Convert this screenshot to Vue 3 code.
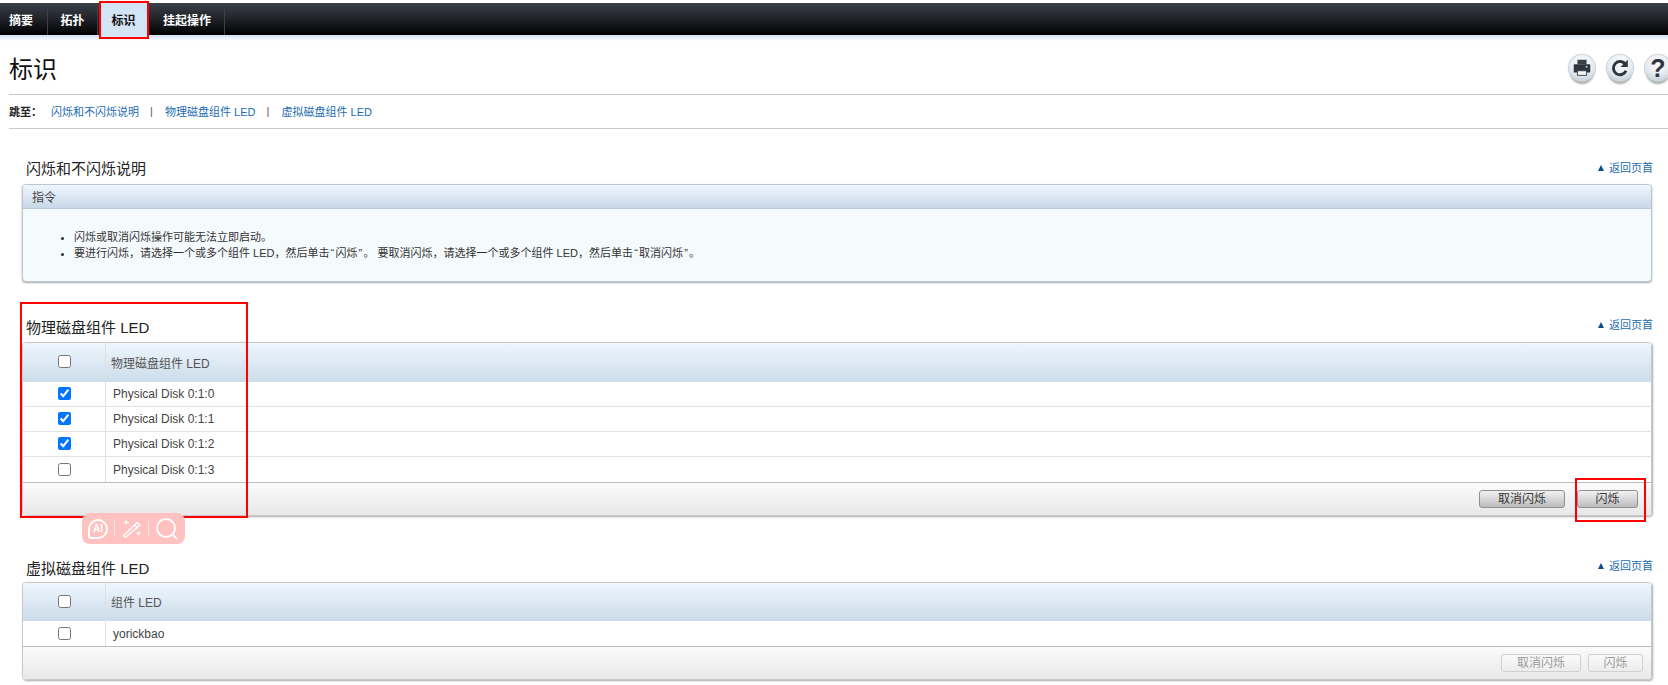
<script setup>
const tabs = [
  { label: '摘要', w: 48 },
  { label: '拓扑', w: 50 },
  { label: '标识', w: 49, active: true },
  { label: '挂起操作', w: 77 },
]
const jumps = ['闪烁和不闪烁说明', '物理磁盘组件 LED', '虚拟磁盘组件 LED']
const disks = [
  { name: 'Physical Disk 0:1:0', on: true },
  { name: 'Physical Disk 0:1:1', on: true },
  { name: 'Physical Disk 0:1:2', on: true },
  { name: 'Physical Disk 0:1:3', on: false },
]
</script>

<template>
  <div class="page">
    <nav class="nav">
      <a
        v-for="t in tabs"
        :key="t.label"
        class="tab"
        :class="{ active: t.active }"
        :style="{ width: t.w + 'px' }"
      >{{ t.label }}</a>
    </nav>
    <div class="strip"></div>

    <header class="head">
      <h1>标识</h1>
      <div class="tools">
        <span class="orb">
          <svg viewBox="0 0 24 24" width="22" height="22">
            <rect x="7" y="3" width="10" height="5" fill="#3a4048" />
            <rect x="3" y="8" width="18" height="9" rx="1" fill="#2f353c" />
            <rect x="7" y="15" width="10" height="5" fill="#f4f6f8" stroke="#3a4048" stroke-width="1" />
            <rect x="16" y="10" width="2" height="1.5" fill="#dfe6ec" />
          </svg>
        </span>
        <span class="orb">
          <svg viewBox="0 0 24 24" width="22" height="22">
            <path d="M18 8.2A7.2 7.2 0 1 0 18.6 15" fill="none" stroke="#2f353c" stroke-width="3.2" />
            <path d="M20.5 3v8h-8z" fill="#2f353c" />
          </svg>
        </span>
        <span class="orb q">?</span>
      </div>
    </header>

    <div class="jump">
      <b>跳至：</b>
      <template v-for="(j, i) in jumps" :key="j">
        <a>{{ j }}</a>
        <i v-if="i < jumps.length - 1">|</i>
      </template>
    </div>

    <section class="sec first">
      <div class="sec-head">
        <h2>闪烁和不闪烁说明</h2>
        <a class="top"><span class="tri"></span>返回页首</a>
      </div>
      <div class="panel">
        <div class="panel-title">指令</div>
        <ul>
          <li>闪烁或取消闪烁操作可能无法立即启动。</li>
          <li>要进行闪烁，请选择一个或多个组件 LED，然后单击<span class="qm">“</span>闪烁<span class="qm">”</span>。 要取消闪烁，请选择一个或多个组件 LED，然后单击<span class="qm">“</span>取消闪烁<span class="qm">”</span>。</li>
        </ul>
      </div>
    </section>

    <section class="sec second">
      <div class="sec-head">
        <h2>物理磁盘组件 LED</h2>
        <a class="top"><span class="tri"></span>返回页首</a>
      </div>
      <div class="table">
        <div class="row thead">
          <div class="chk"><input type="checkbox" /></div>
          <div class="cell hcell">物理磁盘组件 LED</div>
        </div>
        <div v-for="d in disks" :key="d.name" class="row body">
          <div class="chk"><input type="checkbox" :checked="d.on" /></div>
          <div class="cell">{{ d.name }}</div>
        </div>
        <div class="foot">
          <button class="btn wide">取消闪烁</button>
          <button class="btn narrow">闪烁</button>
        </div>
      </div>
    </section>

    <section class="sec third">
      <div class="sec-head">
        <h2>虚拟磁盘组件 LED</h2>
        <a class="top"><span class="tri"></span>返回页首</a>
      </div>
      <div class="table">
        <div class="row thead">
          <div class="chk"><input type="checkbox" /></div>
          <div class="cell hcell">组件 LED</div>
        </div>
        <div class="row body">
          <div class="chk"><input type="checkbox" /></div>
          <div class="cell">yorickbao</div>
        </div>
        <div class="foot">
          <button class="btn wide2" disabled>取消闪烁</button>
          <button class="btn narrow2" disabled>闪烁</button>
        </div>
      </div>
    </section>

    <div class="mark m-tab"></div>
    <div class="mark m-table"></div>
    <div class="mark m-btn"></div>

    <div class="float">
      <span class="ai">AI</span>
      <span class="sep"></span>
      <svg viewBox="0 0 24 24" width="21" height="21" fill="none" stroke="#fff" stroke-width="1.6">
        <path d="M5 22l-2-2L15.5 8l3 3z" />
        <path d="M15.5 8l3-3 3 3-3 3" />
        <path d="M6 2v6M3 5h6M20 15v5M17.5 17.5h5" stroke-width="1.3" />
      </svg>
      <span class="sep"></span>
      <svg viewBox="0 0 24 24" width="24" height="24" fill="none" stroke="#fff" stroke-width="1.8">
        <circle cx="11" cy="11" r="9" />
        <path d="M18 18l4 4" />
      </svg>
    </div>
  </div>
</template>

<style>
html, body { margin: 0; overflow: hidden; background: #fff; }
</style>

<style scoped>
.page {
  position: relative;
  width: 1668px;
  height: 685px;
  overflow: hidden;
  padding-top: 3px;
  box-sizing: border-box;
  background: #fff;
  color: #333;
  font-family: "Liberation Sans", "Noto Sans CJK SC", sans-serif;
  font-size: 11px;
}
.nav {
  display: flex;
  height: 32px;
  background: linear-gradient(#3b3f49, #23262c 45%, #000);
}
.tab {
  display: flex;
  align-items: center;
  justify-content: center;
  box-sizing: border-box;
  border-right: 1px solid #3c4046;
  color: #fff;
  font-size: 12px;
  font-weight: 700;
}
.tab:first-child { justify-content: flex-start; padding-left: 9px; }
.tab:last-child { padding-left: 2px; }
.tab.active {
  height: 35px;
  margin: 0 0 -3px 1px;
  padding-bottom: 3px;
  background: #d3e4f6;
  color: #111;
  border-right: 0;
  border-radius: 0 0 0 4px;
}
.strip {
  height: 6px;
  background: linear-gradient(#cfe0f2, #fff);
}
.head {
  display: flex;
  justify-content: space-between;
  align-items: flex-start;
  height: 53px;
  margin-left: 9px;
  border-bottom: 1px solid #c8c8c8;
}
h1 {
  margin: 15px 0 0;
  font-size: 24px;
  line-height: 28px;
  font-weight: 400;
  color: #111;
}
.tools {
  display: flex;
  gap: 12px;
  margin: 14px -3px 0 0;
}
.orb {
  display: flex;
  align-items: center;
  justify-content: center;
  width: 26px;
  height: 26px;
  border-radius: 50%;
  background: radial-gradient(circle at 50% 30%, #fff, #e3eaef 55%, #b4c1cb);
  box-shadow: 0 0 1px 1px #c3cdd4, 0 4px 2px -1px #aaa;
}
.q {
  font-size: 25px;
  font-weight: 700;
  color: #2f353c;
}
.jump {
  display: flex;
  align-items: center;
  height: 34px;
  padding-bottom: 2px;
  margin-left: 9px;
  box-sizing: border-box;
  border-bottom: 1px solid #c8c8c8;
  color: #222;
}
.jump b { width: 42px; font-weight: 700; }
.jump a { color: #1b6cb0; }
.jump i {
  width: 26px;
  padding-right: 1px;
  box-sizing: border-box;
  text-align: center;
  font-style: normal;
  color: #555;
}
.sec { margin: 0 16px 0 22px; }
.first { margin-top: 35px; }
.second { margin-top: 40px; }
.third { margin-top: 46px; }
.sec-head {
  display: flex;
  justify-content: space-between;
  align-items: flex-start;
  height: 20px;
}
h2 {
  margin: -4px 0 0 4px;
  font-size: 15px;
  line-height: 20px;
  font-weight: 400;
  color: #222;
}
.first h2 { margin-top: -5px; }
.third h2 { margin-top: -3px; }
.top {
  display: flex;
  align-items: center;
  margin: -5px -1px 0 0;
  line-height: 16px;
  color: #1b6cb0;
  font-size: 11px;
}
.third .top { margin-top: -4px; }
.first .top { margin-top: -4px; }
.tri {
  width: 0;
  height: 0;
  margin-right: 5px;
  border: 3.5px solid transparent;
  border-top: 0;
  border-bottom: 6px solid #0d4a86;
}
.panel {
  height: 98px;
  box-sizing: border-box;
  border: 1px solid #bcc4cc;
  border-radius: 4px;
  background: #f5fafd;
  box-shadow: 0 1px 2px #aaa;
  overflow: hidden;
}
.panel-title {
  height: 24px;
  padding-left: 9px;
  box-sizing: border-box;
  border-bottom: 1px solid #b8c9da;
  background: linear-gradient(#eef6fd, #c8d8e8);
  font-size: 12px;
  line-height: 26px;
  color: #444;
}
ul {
  margin: 20px 0 0;
  padding: 0 0 0 51px;
  line-height: 16px;
  color: #333;
}
.qm { display: inline-block; width: 6px; text-align: center; }
.table {
  box-sizing: border-box;
  border: 1px solid #c8c8c8;
  border-radius: 4px;
  box-shadow: 1px 1px 2px #aaa;
  overflow: hidden;
}
.row { display: flex; }
.thead {
  height: 39px;
  background: linear-gradient(#eef6fd, #ccdcea);
}
.third .thead { height: 38px; }
.body {
  height: 25px;
  box-sizing: border-box;
  border-bottom: 1px solid #e2e2e2;
}
.body:nth-last-child(2) { border-bottom: 0; }
.chk {
  display: flex;
  align-items: center;
  justify-content: center;
  flex: none;
  width: 83px;
  box-sizing: border-box;
  border-right: 1px solid #e0e0e0;
  padding-left: 1px;
}
.thead .chk { padding-bottom: 3px; }
.third .thead .chk { padding-bottom: 2px; }
.body .chk { padding-bottom: 1px; }
.cell {
  display: flex;
  align-items: center;
  padding-left: 7px;
  font-size: 12px;
  color: #444;
}
.chk input { margin: 0; width: 13px; height: 13px; }
.hcell { padding-left: 5px; padding-bottom: 1px; color: #555; }
.foot {
  display: flex;
  justify-content: flex-end;
  align-items: flex-start;
  height: 33px;
  box-sizing: border-box;
  border-top: 1px solid #bbb;
  padding-top: 7px;
  background: linear-gradient(#fbfbfb, #e8e8e8);
}
.btn {
  padding: 0;
  height: 18px;
  box-sizing: border-box;
  border: 1px solid #8f8f8f;
  border-radius: 3px;
  background: linear-gradient(#f2f2f2, #bcbcbc);
  font-family: inherit;
  font-size: 12px;
  line-height: 16px;
  color: #333;
}
.wide { width: 86px; margin-right: 12px; }
.narrow { width: 61px; margin-right: 13px; }
.btn:disabled {
  border-color: #cfcfcf;
  background: linear-gradient(#fafafa, #ececec);
  color: #999;
}
.wide2 { width: 80px; margin-right: 7px; }
.narrow2 { width: 55px; margin-right: 8px; }
.mark {
  position: absolute;
  box-sizing: border-box;
  border: 2px solid #f00;
}
.m-tab { left: 99px; top: 1px; width: 50px; height: 38px; }
.m-table { left: 20px; top: 302px; width: 228px; height: 216px; }
.m-btn { left: 1575px; top: 478px; width: 71px; height: 44px; }
.float {
  position: absolute;
  left: 82px;
  top: 513px;
  display: flex;
  align-items: center;
  justify-content: space-between;
  width: 103px;
  height: 31px;
  padding: 0 6px;
  box-sizing: border-box;
  border-radius: 8px;
  background: #ffc2c0;
}
.ai {
  display: flex;
  align-items: center;
  justify-content: center;
  width: 20px;
  height: 20px;
  box-sizing: border-box;
  border: 2px solid #fff;
  border-radius: 50% 50% 50% 3px;
  color: #fff;
  font-size: 10px;
  font-weight: 700;
}
.sep { width: 1px; height: 15px; background: #ffe6e5; }
</style>
